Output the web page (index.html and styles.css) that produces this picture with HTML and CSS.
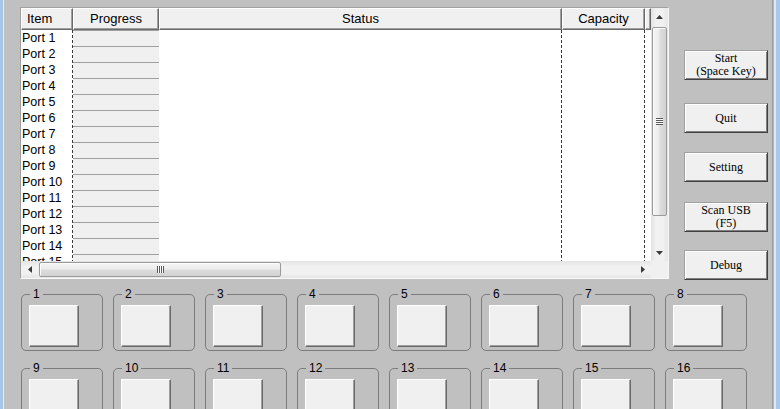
FILE: index.html
```html
<!DOCTYPE html>
<html>
<head>
<meta charset="utf-8">
<link rel="stylesheet" href="styles.css">
</head>
<body>
<div class="window">
  <div class="edge-l"></div>
  <div class="client">
    <div class="top">
      <div class="list">
        <div class="list-main">
          <div class="header">
            <div class="hcell c-item">Item</div>
            <div class="hcell c-prog">Progress</div>
            <div class="hcell c-status">Status</div>
            <div class="hcell c-cap">Capacity</div>
            <div class="hcell c-fill"></div>
          </div>
          <div class="body">
            <div class="col c-item dash">
              <div class="port">Port 1</div><div class="port">Port 2</div><div class="port">Port 3</div><div class="port">Port 4</div>
              <div class="port">Port 5</div><div class="port">Port 6</div><div class="port">Port 7</div><div class="port">Port 8</div>
              <div class="port">Port 9</div><div class="port">Port 10</div><div class="port">Port 11</div><div class="port">Port 12</div>
              <div class="port">Port 13</div><div class="port">Port 14</div><div class="port">Port 15</div>
            </div>
            <div class="col c-prog">
              <div class="pcell"></div><div class="pcell"></div><div class="pcell"></div><div class="pcell"></div>
              <div class="pcell"></div><div class="pcell"></div><div class="pcell"></div><div class="pcell"></div>
              <div class="pcell"></div><div class="pcell"></div><div class="pcell"></div><div class="pcell"></div>
              <div class="pcell"></div><div class="pcell"></div><div class="pcell"></div>
            </div>
            <div class="col c-status dash"></div>
            <div class="col c-cap dash"></div>
          </div>
          <div class="hscroll">
            <div class="sb-btn"><svg width="4" height="7" viewBox="0 0 4 7"><polygon points="4,0 4,7 0,3.5" fill="#3a3a3a"/></svg></div>
            <div class="h-track">
              <div class="h-thumb">
                <svg width="7" height="7" viewBox="0 0 7 7"><rect x="0" y="0" width="1" height="7" fill="#5a5a5a"/><rect x="1" y="0" width="1" height="7" fill="#fff"/><rect x="2" y="0" width="1" height="7" fill="#5a5a5a"/><rect x="3" y="0" width="1" height="7" fill="#fff"/><rect x="4" y="0" width="1" height="7" fill="#5a5a5a"/><rect x="5" y="0" width="1" height="7" fill="#fff"/><rect x="6" y="0" width="1" height="7" fill="#5a5a5a"/></svg>
              </div>
            </div>
            <div class="sb-btn"><svg width="4" height="7" viewBox="0 0 4 7"><polygon points="0,0 0,7 4,3.5" fill="#3a3a3a"/></svg></div>
          </div>
        </div>
        <div class="vcol">
          <div class="vscroll">
            <div class="sb-btn"><svg width="7" height="4" viewBox="0 0 7 4"><polygon points="0,4 7,4 3.5,0" fill="#3a3a3a"/></svg></div>
            <div class="v-track">
              <div class="v-thumb">
                <svg width="7" height="7" viewBox="0 0 7 7"><rect x="0" y="0" width="7" height="1" fill="#5a5a5a"/><rect x="0" y="1" width="7" height="1" fill="#fff"/><rect x="0" y="2" width="7" height="1" fill="#5a5a5a"/><rect x="0" y="3" width="7" height="1" fill="#fff"/><rect x="0" y="4" width="7" height="1" fill="#5a5a5a"/><rect x="0" y="5" width="7" height="1" fill="#fff"/><rect x="0" y="6" width="7" height="1" fill="#5a5a5a"/></svg>
              </div>
            </div>
            <div class="sb-btn"><svg width="7" height="4" viewBox="0 0 7 4"><polygon points="0,0 7,0 3.5,4" fill="#3a3a3a"/></svg></div>
          </div>
          <div class="corner"></div>
        </div>
      </div>
      <div class="buttons">
        <button class="btn">Start<br>(Space Key)</button>
        <button class="btn b-quit">Quit</button>
        <button class="btn b-setting">Setting</button>
        <button class="btn b-scan">Scan USB<br>(F5)</button>
        <button class="btn b-debug">Debug</button>
      </div>
    </div>
    <div class="groups">
      <fieldset class="grp"><legend>1</legend><button class="gbtn"></button></fieldset>
      <fieldset class="grp"><legend>2</legend><button class="gbtn"></button></fieldset>
      <fieldset class="grp"><legend>3</legend><button class="gbtn"></button></fieldset>
      <fieldset class="grp"><legend>4</legend><button class="gbtn"></button></fieldset>
      <fieldset class="grp"><legend>5</legend><button class="gbtn"></button></fieldset>
      <fieldset class="grp"><legend>6</legend><button class="gbtn"></button></fieldset>
      <fieldset class="grp"><legend>7</legend><button class="gbtn"></button></fieldset>
      <fieldset class="grp"><legend>8</legend><button class="gbtn"></button></fieldset>
      <fieldset class="grp"><legend>9</legend><button class="gbtn"></button></fieldset>
      <fieldset class="grp"><legend>10</legend><button class="gbtn"></button></fieldset>
      <fieldset class="grp"><legend>11</legend><button class="gbtn"></button></fieldset>
      <fieldset class="grp"><legend>12</legend><button class="gbtn"></button></fieldset>
      <fieldset class="grp"><legend>13</legend><button class="gbtn"></button></fieldset>
      <fieldset class="grp"><legend>14</legend><button class="gbtn"></button></fieldset>
      <fieldset class="grp"><legend>15</legend><button class="gbtn"></button></fieldset>
      <fieldset class="grp"><legend>16</legend><button class="gbtn"></button></fieldset>
    </div>
  </div>
  <div class="edge-r"></div>
</div>
</body>
</html>
```

FILE: styles.css
```css
* { box-sizing: border-box; }
html, body { margin: 0; padding: 0; }
body {
  width: 780px;
  height: 409px;
  overflow: hidden;
  background: #c0c0c0;
  font-family: "Liberation Sans", Arial, sans-serif;
  color: #000;
}
.window { display: flex; width: 780px; height: 409px; overflow: hidden; }
.edge-l { width: 4px; flex: none; background: linear-gradient(to right, #a7c5e7 0 3px, #e2ebf6 3px 4px); }
.edge-r { width: 8px; flex: none; background: linear-gradient(to right, #9a9a9a 0 1px, #b4b4b4 1px 2px, #dde8f5 2px 4px, #aac8ea 4px 8px); }
.client { flex: 1; min-width: 0; overflow: hidden; background: #c0c0c0; }

.top { display: flex; align-items: flex-start; gap: 15px; height: 279px; padding: 7px 4px 0 16px; }

.list {
  width: 649px; height: 272px; flex: none;
  display: flex;
  background: #fff;
  border: 1px solid; border-color: #a0a0a0 #f8f8f8 #f8f8f8 #a0a0a0;
}
.list-main { width: 630px; flex: none; display: flex; flex-direction: column; }

.header { display: flex; height: 22px; flex: none; }
.hcell {
  height: 22px;
  background: #f0f0f0;
  border: 1px solid; border-color: #fff #696969 #696969 #fff;
  box-shadow: inset -1px -1px #a0a0a0;
  font-size: 13px; line-height: 19px;
  text-align: center; white-space: nowrap; overflow: hidden;
}
.c-item { width: 52px; flex: none; }
.c-prog { width: 86px; flex: none; }
.c-status { width: 403px; flex: none; }
.c-cap { width: 83px; flex: none; }
.c-fill { flex: 1; }
.hcell.c-item { text-align: left; padding-left: 5px; }

.body { display: flex; height: 231px; flex: none; overflow: hidden; }
.col { height: 100%; overflow: hidden; }
.dash {
  background-image: linear-gradient(to bottom, #3a3a3a 3px, transparent 3px);
  background-size: 1px 5px;
  background-repeat: repeat-y;
  background-position: right top;
}
.port { height: 16px; line-height: 17px; font-size: 12.5px; padding-left: 1px; white-space: nowrap; }
.pcell { height: 16px; background: #f0f0f0; border-top: 1px solid #a0a0a0; }

.hscroll { display: flex; height: 17px; flex: none; background: linear-gradient(to bottom, #e3e3e3, #f1f1f1 30%, #f1f1f1 70%, #e6e6e6); }
.sb-btn { width: 17px; height: 17px; flex: none; display: flex; align-items: center; justify-content: center; }
.h-track { flex: 1; display: flex; align-items: center; padding-left: 1px; }
.h-thumb {
  width: 242px; height: 15px;
  border: 1px solid #9a9a9a; border-radius: 2px;
  background: linear-gradient(to bottom, #f5f5f5, #ececec 45%, #dcdcdc 55%, #d2d2d2);
  box-shadow: inset 1px 1px #fcfcfc;
  display: flex; align-items: center; justify-content: center;
}

.vcol { width: 17px; flex: none; display: flex; flex-direction: column; }
.vscroll { height: 253px; flex: none; display: flex; flex-direction: column; background: linear-gradient(to right, #e3e3e3, #f1f1f1 30%, #f1f1f1 70%, #e6e6e6); }
.v-track { flex: 1; padding: 2px 1px 0 1px; }
.v-thumb {
  width: 15px; height: 189px;
  border: 1px solid #9a9a9a; border-radius: 2px;
  background: linear-gradient(to right, #f5f5f5, #ececec 45%, #dcdcdc 55%, #d2d2d2);
  box-shadow: inset 1px 1px #fcfcfc;
  display: flex; align-items: center; justify-content: center;
}
.corner { height: 17px; flex: none; background: #f0f0f0; }

.buttons { width: 84px; flex: none; display: flex; flex-direction: column; padding-top: 43px; }
.btn {
  height: 30px; width: 84px; padding: 0; margin: 0;
  background: #f0f0f0;
  border: 1px solid; border-color: #a0a0a0 #404040 #404040 #a0a0a0;
  box-shadow: inset 1px 1px #fff, inset -1px -1px #808080;
  font-family: "Liberation Serif", "Times New Roman", serif;
  font-size: 12px; line-height: 13px; color: #000;
  text-align: center;
}
.b-quit { margin-top: 23px; }
.b-setting { margin-top: 19px; }
.b-scan { margin-top: 20px; }
.b-debug { margin-top: 18px; }

.groups {
  display: grid;
  grid-template-columns: repeat(8, 82px);
  column-gap: 10px; row-gap: 10px;
  padding-left: 17px; margin-top: 8px;
}
.grp {
  margin: 0; min-width: 0;
  padding: 4px 0 3px 7px;
  border: 1px solid #7c7c7c; border-radius: 5px;
}
.grp legend { padding: 0 3px; margin-left: 1px; font-size: 12px; line-height: 14px; color: #000; }
.gbtn {
  display: block; width: 50px; height: 42px; padding: 0; margin: 0;
  background: #f0f0f0;
  border: 1px solid; border-color: #fff #696969 #696969 #fff;
  box-shadow: inset -1px -1px #a0a0a0;
}
```
